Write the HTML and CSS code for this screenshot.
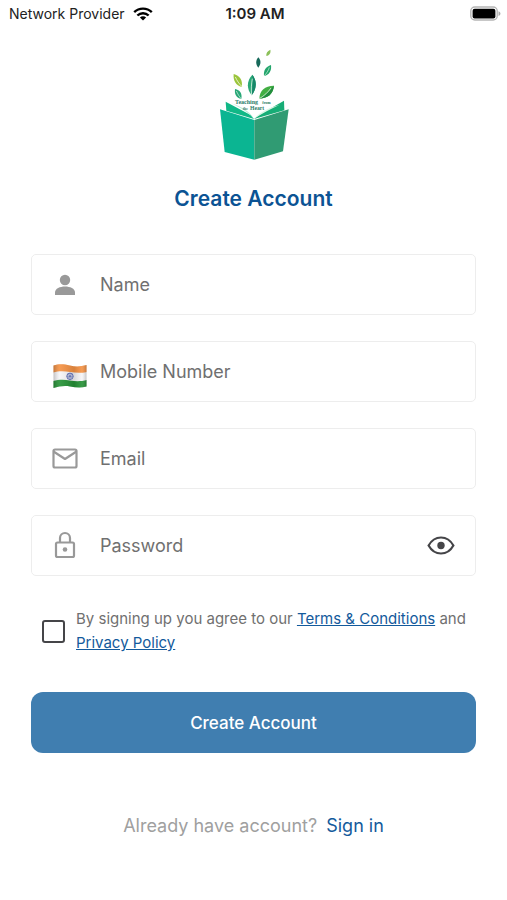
FILE: index.html
```html
<!DOCTYPE html>
<html lang="en">
<head>
<meta charset="utf-8">
<meta name="viewport" content="width=device-width, initial-scale=1">
<title>Create Account</title>
<link rel="stylesheet" href="styles.css">
</head>
<body>
<header class="status">
  <div class="carrier">
    <span>Network Provider</span>
    <svg width="20" height="14" viewBox="0 0 20 14" fill="none" stroke="#000" stroke-width="2.4" aria-hidden="true">
      <path d="M1.2 5.2a12.6 12.6 0 0 1 17.6 0"/>
      <path d="M4.4 8.5a8 8 0 0 1 11.2 0"/>
      <path d="M10 13.6 6.9 10.6a4.4 4.4 0 0 1 6.2 0z" fill="#000" stroke="none"/>
    </svg>
  </div>
  <time class="time">1:09 AM</time>
  <svg class="battery" width="31" height="16" viewBox="0 0 31 16" aria-hidden="true">
    <rect x="0.8" y="1" width="26.4" height="13" rx="4" fill="#fff" stroke="#b5b5b5" stroke-width="1.4"/>
    <rect x="2.6" y="2.8" width="22.8" height="9.6" rx="2" fill="#000"/>
    <path d="M28.5 5.2c2.6.8 2.6 4 0 4.8z" fill="#aaa"/>
  </svg>
</header>

<main class="page">
  <svg class="logo" width="70" height="113" viewBox="40 24 210 339" role="img" aria-label="Teaching from the Heart">
    <path d="M194 29c2 9-2 17-12 19-1-9 3-15 12-19z" fill="#8cc05a"/>
    <path d="M158 52c9 9 8 21 0 31-8-9-9-21 0-31z" fill="#17695a"/>
    <path d="M196 75c2 17-4 29-21 33-2-17 5-27 21-33z" fill="#23a56c"/>
    <path d="M191 82c-3 10-8 18-16 26" fill="none" stroke="#d5f2df" stroke-width="2"/>
    <path d="M84 102c18 5 28 18 24 39-17-5-26-18-24-39z" fill="#9bc53c"/>
    <path d="M89 111c5 11 11 20 20 29" fill="none" stroke="#f1f8d8" stroke-width="2.5"/>
    <path d="M140 104c15 19 13 43-2 62-16-19-15-44 2-62z" fill="#2aa876"/>
    <path d="M140 104c15 19 13 43-2 62 3-21 4-40 2-62z" fill="#168669"/>
    <path d="M140 116c-3 17-4 32-2 50" fill="none" stroke="#d8f3e5" stroke-width="2.5"/>
    <path d="M88 147c15 3 22 13 19 30-15-3-21-14-19-30z" fill="#29a777"/>
    <path d="M92 153c4 9 9 17 15 24" fill="none" stroke="#d8f3e5" stroke-width="2"/>
    <path d="M205 137c-3 25-17 37-44 39 1-25 16-38 44-39z" fill="#42ae43"/>
    <path d="M205 137c-3 25-17 37-44 39 15-11 29-23 44-39z" fill="#228d3e"/>
    <path d="M196 144c-9 13-20 23-35 32" fill="none" stroke="#e3f6df" stroke-width="2.5"/>
    <path d="M60 185 135 225l10 12-83-25z" fill="#10b887"/>
    <path d="M77 190c30 10 53 22 66 44-20-20-40-31-66-44z" fill="#bdeedb"/>
    <path d="M235 182 165 222l-20 15 91-26z" fill="#17ad76"/>
    <path d="M222 194c-30 9-56 19-75 41 23-16 48-27 75-41z" fill="#d8f5e4"/>
    <path d="M43 208 146 240v119L57 336z" fill="#0bb592"/>
    <path d="M249 208 146 240v119l86-25z" fill="#309b73"/>
    <text class="motto" x="88" y="192" font-size="18">Teaching</text>
    <text class="motto" x="170" y="192" font-size="12">from</text>
    <text class="motto" x="111" y="209" font-size="12">the</text>
    <text class="motto" x="133" y="209" font-size="17">Heart</text>
  </svg>

  <h1>Create Account</h1>

  <form class="form">
    <label class="field">
      <svg class="icon" viewBox="0 0 34 34" fill="#999" role="img" aria-label="Name">
        <circle cx="17" cy="12" r="5.2"/>
        <path d="M7 27v-2.400c0-8 20-8 20 0V27z"/>
      </svg>
      <input type="text" placeholder="Name">
    </label>
    <label class="field">
      <svg class="icon flag" viewBox="0 -1 34 34" role="img" aria-label="Mobile number, India">
        <defs>
          <clipPath id="wave"><path d="M.5 9.500C6 7.500 11 8 17 9.500s11 1 16.500-.5V30.500C28 32 23 31.500 17 30.500S6 30.500 .5 32z"/></clipPath>
          <linearGradient id="fold"><stop offset="0" stop-color="#333" stop-opacity=".3"/><stop offset=".2" stop-color="#fff" stop-opacity=".15"/><stop offset=".62" stop-color="#555" stop-opacity=".18"/><stop offset=".85" stop-color="#fff" stop-opacity=".15"/><stop offset="1" stop-color="#333" stop-opacity=".3"/></linearGradient>
        </defs>
        <g clip-path="url(#wave)">
          <path d="M0 0h34v34H0z" fill="#f6f5f7"/>
          <path d="M0 5h34v11c-6 1.200-11 1-17 0s-11-1.200-17 .5z" fill="#f58a35"/>
          <path d="M0 25c6-1.500 11-1.500 17-.5s11 1 17-.5V34H0z" fill="#158a27"/>
          <path d="M0 0h34v34H0z" fill="url(#fold)"/>
        </g>
        <g fill="none" stroke="#5968ad">
          <circle cx="17" cy="20.300" r="3.200"/>
          <path d="M17 17.100v6.400M13.800 20.300h6.400M14.700 18l4.600 4.600M19.300 18l-4.600 4.600" stroke-width=".7"/>
        </g>
      </svg>
      <input type="tel" placeholder="Mobile Number">
    </label>
    <label class="field">
      <svg class="icon" viewBox="0 0 34 34" fill="none" stroke="#999" stroke-width="2.200" stroke-linejoin="round" role="img" aria-label="Email">
        <rect x="5.500" y="7.500" width="23" height="18" rx="1.500"/>
        <path d="M5.500 9.500 17 17 28.500 9.500"/>
      </svg>
      <input type="email" placeholder="Email">
    </label>
    <div class="field">
      <svg class="icon" viewBox="0 0 34 34" fill="none" stroke="#999" stroke-width="2.200" aria-hidden="true">
        <rect x="8" y="13.500" width="18" height="14.500" rx="1.500"/>
        <path d="M12 13.500V9a5 5 0 0 1 10 0v4.500"/>
        <circle cx="17" cy="20.500" r="2.300" fill="#999" stroke="none"/>
      </svg>
      <input type="password" placeholder="Password" aria-label="Password">
      <button class="reveal" type="button" aria-label="Show password">
        <svg width="28" height="20" viewBox="0 0 28 20" fill="none" stroke="#454548" stroke-width="2.200" aria-hidden="true">
          <path d="M1.600 9.500C4.500 4.300 8.800 1.500 14 1.500s9.500 2.800 12.400 8c-2.900 5.200-7.200 8-12.400 8S4.500 14.700 1.600 9.500z"/>
          <circle cx="14" cy="9.500" r="3.700" fill="#454548" stroke="none"/>
        </svg>
      </button>
    </div>

    <div class="terms">
      <input type="checkbox" id="agree">
      <p><label for="agree">By signing up you agree to our</label> <a href="#terms">Terms &amp; Conditions</a> and <a href="#privacy">Privacy Policy</a></p>
    </div>

    <button class="submit" type="submit">Create Account</button>
  </form>

  <p class="signin">Already have account? <a href="#signin">Sign in</a></p>
</main>
</body>
</html>
```
FILE: styles.css
```css
* {
  box-sizing: border-box;
}

body {
  margin: 0;
  background: #fff;
  font-family: Inter, "Liberation Sans", sans-serif;
  color: #707070;
}

h1,
p {
  margin: 0;
}

a {
  color: #135a9c;
}

.status {
  display: grid;
  grid-template-columns: 1fr auto 1fr;
  align-items: center;
  height: 27px;
  padding: 0 6px 0 9px;
  font-size: 14px;
  color: #222;
}

.carrier {
  display: flex;
  align-items: center;
  gap: 8px;
  white-space: nowrap;
}

.time {
  font-size: 15px;
  font-weight: 600;
}

.battery {
  justify-self: end;
}

.page {
  display: flex;
  flex-direction: column;
  align-items: center;
  padding: 21px 31px;
}

.motto {
  font-family: "Liberation Serif", serif;
  font-weight: 700;
  fill: #2c7d69;
}

h1 {
  margin-top: 24px;
  font-size: 21px;
  line-height: 28px;
  font-weight: 600;
  color: #0b5394;
}

.form {
  display: flex;
  flex-direction: column;
  gap: 26px;
  width: 100%;
  margin-top: 41px;
}

.field {
  display: flex;
  align-items: center;
  height: 61px;
  padding: 0 20px 0 16px;
  border: 1px solid #ededed;
  border-radius: 5px;
}

.icon {
  flex: none;
  width: 34px;
  height: 34px;
}

.flag {
  margin-left: 5px;
  margin-right: -5px;
}

.field input {
  flex: 1;
  min-width: 0;
  margin-left: 18px;
  padding: 0;
  border: 0;
  outline: 0;
  background: none;
  font: inherit;
  font-size: 18px;
  color: #333;
}

.field input::placeholder {
  color: #707070;
  opacity: 1;
}

.reveal {
  display: flex;
  padding: 0;
  border: 0;
  background: none;
}

.terms {
  display: flex;
  align-items: center;
  gap: 11px;
  margin-top: 5px;
  padding-left: 11px;
  font-size: 15px;
  line-height: 24px;
}

.terms input {
  flex: none;
  appearance: none;
  width: 23px;
  height: 23px;
  margin: 0;
  border: 2px solid #454548;
  border-radius: 3px;
}

.terms input:checked {
  background: #407eb0;
}

.submit {
  height: 61px;
  margin-top: 11px;
  border: 0;
  border-radius: 12px;
  background: #407eb0;
  font: inherit;
  font-size: 17px;
  font-weight: 500;
  color: #fff;
}

.signin {
  margin-top: 61px;
  font-size: 18px;
  line-height: 24px;
  color: #a0a0a0;
}

.signin a {
  margin-left: 4px;
  text-decoration: none;
}
```
